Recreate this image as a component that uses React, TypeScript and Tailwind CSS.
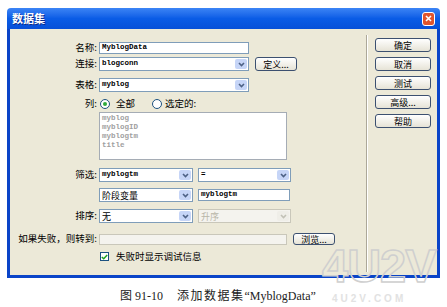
import type { ReactNode } from "react";

const cjk = "font-['Noto_Sans_CJK_SC',sans-serif]";
const mono = "font-['Liberation_Mono',monospace]";

function Label({ children }: { children: ReactNode }) {
  return (
    <div className={`w-[89px] shrink-0 pr-[2px] text-right text-[9.5px] leading-none text-black ${cjk}`}>
      {children}
    </div>
  );
}

function Chevron({ color = "#4d6185" }: { color?: string }) {
  return (
    <svg width="7" height="5" viewBox="0 0 7 5">
      <path d="M1 1 L3.5 3.5 L6 1" fill="none" stroke={color} strokeWidth="1.6" />
    </svg>
  );
}

function TextBox({ w, h = 12, children, disabled }: { w: number; h?: number; children?: ReactNode; disabled?: boolean }) {
  return (
    <div
      className={`flex items-center border pl-[2px] ${disabled ? "border-[#c9c7ba] bg-[#f4f3ee]" : "border-[#7f9db9] bg-white"}`}
      style={{ width: w, height: h }}
    >
      {children}
    </div>
  );
}

function Select({ w, children, disabled }: { w: number; children?: ReactNode; disabled?: boolean }) {
  return (
    <div
      className={`flex h-[14px] items-stretch border ${disabled ? "border-[#c9c7ba] bg-[#f4f3ee]" : "border-[#7f9db9] bg-white"}`}
      style={{ width: w }}
    >
      <div className="flex flex-1 items-center overflow-hidden pl-[2px]">{children}</div>
      <div
        className={`m-px flex w-[12px] items-center justify-center rounded-[2px] ${disabled ? "bg-[#efeee8]" : "bg-[#c6d5f7]"}`}
      >
        <Chevron color={disabled ? "#c2c1b6" : "#4d6185"} />
      </div>
    </div>
  );
}

function XpButton({ w, h = 14, children }: { w: number; h?: number; children: ReactNode }) {
  return (
    <div
      className={`flex items-center justify-center rounded-[3px] border border-[#3c5070] bg-gradient-to-b from-white to-[#e6e3d6] text-[9px] leading-none text-black ${cjk}`}
      style={{ width: w, height: h }}
    >
      {children}
    </div>
  );
}

function MonoText({ children, gray }: { children: ReactNode; gray?: boolean }) {
  return (
    <span className={`text-[7.5px] leading-none font-semibold ${mono} ${gray ? "text-[#a0a0a0]" : "text-black"}`}>
      {children}
    </span>
  );
}

function CjkText({ children, gray }: { children: ReactNode; gray?: boolean }) {
  return <span className={`text-[9px] leading-none ${cjk} ${gray ? "text-[#b8b6a8]" : "text-black"}`}>{children}</span>;
}

function Radio({ checked }: { checked?: boolean }) {
  return (
    <div className="flex h-[10px] w-[10px] items-center justify-center rounded-full border border-[#1c5180] bg-white">
      {checked && <div className="h-[4px] w-[4px] rounded-full bg-[#2fa93a]" />}
    </div>
  );
}

export default function App() {
  return (
    <div className="relative h-[307px] w-[447px] overflow-hidden bg-white pt-[8px]">
      <div className="ml-[7px] flex h-[270px] w-[433px] flex-col">
        {/* title bar */}
        <div className="flex h-[21px] shrink-0 items-center justify-between rounded-t-[4px] bg-gradient-to-b from-[#3b84f5] via-[#0a5ce6] to-[#0750d8] pl-[5px] pr-[5px]">
          <span className={`text-[11px] font-bold leading-none text-white [text-shadow:1px_1px_0_#0a2a8a] ${cjk}`}>数据集</span>
          <div className="flex h-[14px] w-[13px] items-center justify-center rounded-[3px] border border-white bg-[#e0542c]">
            <svg width="7" height="7" viewBox="0 0 7 7">
              <path d="M1 1 L6 6 M6 1 L1 6" stroke="white" strokeWidth="1.6" />
            </svg>
          </div>
        </div>

        {/* body */}
        <div className="flex flex-1 border-x-[3px] border-b-[3px] border-[#0a44c8] bg-[#ece9d8]">
          <div className="flex w-[356px] shrink-0 flex-col pt-[13px]">
            <div className="flex items-center">
              <Label>名称:</Label>
              <TextBox w={150}>
                <MonoText>MyblogData</MonoText>
              </TextBox>
            </div>

            <div className="mt-[3px] flex items-center">
              <Label>连接:</Label>
              <Select w={150}>
                <MonoText>blogconn</MonoText>
              </Select>
              <div className="ml-[6px]">
                <XpButton w={42}>定义...</XpButton>
              </div>
            </div>

            <div className="mt-[7px] flex items-center">
              <Label>表格:</Label>
              <Select w={150}>
                <MonoText>myblog</MonoText>
              </Select>
            </div>

            <div className="mt-[6px] flex h-[12px] items-center">
              <Label>列:</Label>
              <div className="ml-px flex items-center">
                <Radio checked />
                <span className={`ml-[6px] text-[9.5px] leading-none ${cjk}`}>全部</span>
              </div>
              <div className="ml-[17px] flex items-center">
                <Radio />
                <span className={`ml-[3px] text-[9.5px] leading-none ${cjk}`}>选定的:</span>
              </div>
            </div>

            <div className="mt-[2px] flex">
              <div className="w-[89px] shrink-0" />
              <div className="flex h-[48px] w-[188px] flex-col gap-[1.5px] border border-[#a5acb5] bg-white pl-[2px] pt-[2px]">
                <MonoText gray>myblog</MonoText>
                <MonoText gray>myblogID</MonoText>
                <MonoText gray>myblogtm</MonoText>
                <MonoText gray>title</MonoText>
              </div>
            </div>

            <div className="mt-[8px] flex items-center">
              <Label>筛选:</Label>
              <Select w={94}>
                <MonoText>myblogtm</MonoText>
              </Select>
              <div className="ml-[5px]">
                <Select w={93}>
                  <MonoText>=</MonoText>
                </Select>
              </div>
            </div>

            <div className="mt-[6px] flex items-center">
              <div className="w-[89px] shrink-0" />
              <Select w={94}>
                <CjkText>阶段变量</CjkText>
              </Select>
              <div className="ml-[5px]">
                <TextBox w={92} h={12}>
                  <MonoText>myblogtm</MonoText>
                </TextBox>
              </div>
            </div>

            <div className="mt-[7px] flex items-center">
              <Label>排序:</Label>
              <Select w={94}>
                <CjkText>无</CjkText>
              </Select>
              <div className="ml-[5px]">
                <Select w={93} disabled>
                  <CjkText gray>升序</CjkText>
                </Select>
              </div>
            </div>

            <div className="mt-[10px] flex items-center">
              <Label>如果失败，则转到:</Label>
              <TextBox w={188} h={11} disabled />
              <div className="ml-[6px]">
                <XpButton w={42} h={12}>浏览...</XpButton>
              </div>
            </div>

            <div className="mt-[7px] flex items-center">
              <div className="w-[90px] shrink-0" />
              <div className="flex h-[9px] w-[9px] items-center justify-center border border-[#1c5180] bg-white">
                <svg width="7" height="6" viewBox="0 0 7 6">
                  <path d="M0.8 3 L2.7 4.8 L6.2 0.9" fill="none" stroke="#21a121" strokeWidth="1.5" />
                </svg>
              </div>
              <span className={`ml-[7px] text-[9.5px] leading-none ${cjk}`}>失败时显示调试信息</span>
            </div>
          </div>

          <div className="mb-[3px] mt-[6px] flex w-[2px] shrink-0">
            <div className="w-px bg-[#aca899]" />
            <div className="w-px bg-white" />
          </div>

          <div className="ml-[7px] flex flex-col gap-[5px] pt-[9px]">
            <XpButton w={56}>确定</XpButton>
            <XpButton w={56}>取消</XpButton>
            <XpButton w={56}>测试</XpButton>
            <XpButton w={56}>高级...</XpButton>
            <XpButton w={56}>帮助</XpButton>
          </div>
        </div>
      </div>

      {/* caption */}
      <div className={`mt-[12px] flex items-center pl-[120px] text-[12px] leading-none text-[#222] font-['Liberation_Serif','Noto_Sans_CJK_SC',serif]`}>
        <span>图 91-10</span>
        <span className="ml-[14px] tracking-[1.5px]">添加数据集</span>
        <span>“MyblogData”</span>
      </div>

      {/* watermark */}
      <div className="pointer-events-none absolute left-[322px] top-[249px] text-[47px] font-bold leading-[34px] tracking-[-1px] text-transparent [-webkit-text-stroke:1.5px_#cfcfcf] font-['Liberation_Sans',sans-serif]">
        4U2V
      </div>
      <div className="pointer-events-none absolute left-[332px] top-[294px] text-[10px] font-bold leading-none tracking-[3px] text-[#e2e2e2] font-['Liberation_Sans',sans-serif]">
        4U2V.COM
      </div>
    </div>
  );
}
